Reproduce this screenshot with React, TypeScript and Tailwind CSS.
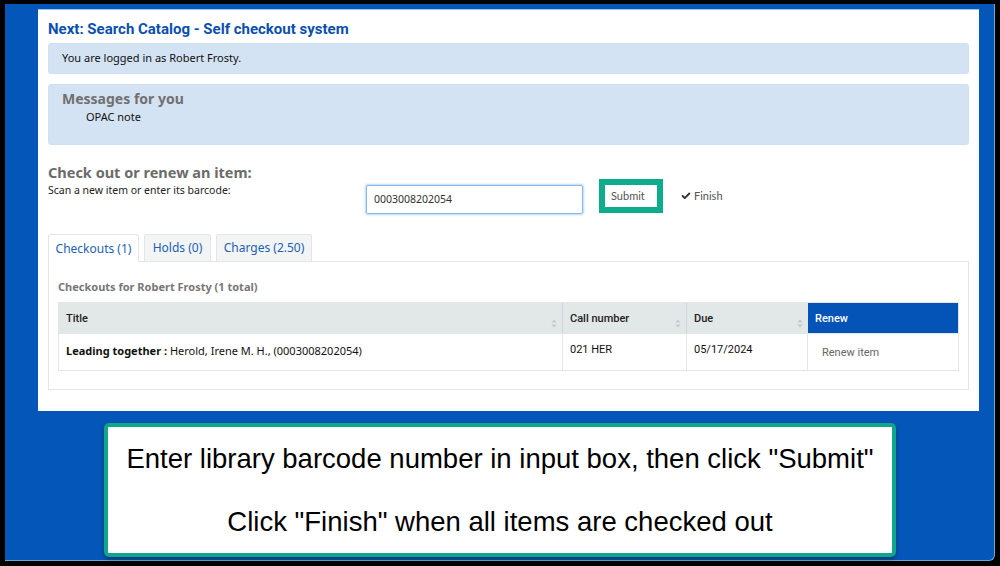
import { Check } from "lucide-react";

function SortIcon() {
  return (
    <svg width="6" height="9" viewBox="0 0 6 9" className="absolute right-[5px] bottom-[5px]">
      <path d="M3 0.5 L5.5 3.5 H0.5 Z" fill="#c3c8cc" />
      <path d="M3 8.5 L5.5 5.5 H0.5 Z" fill="#c3c8cc" />
    </svg>
  );
}

export default function App() {
  const noto = "font-['Noto_Sans','Open_Sans',sans-serif]";
  return (
    <div className="w-[1000px] h-[566px] bg-black pt-[4px] pl-[5px] pr-[5px] pb-[5px]">
      <div className="w-full h-full bg-[#0456b8] rounded-br-[6px] border-b border-r border-[#6fa7c7] flex flex-col items-start">
        {/* page panel */}
        <div className={`ml-[33px] mt-[5px] w-[941px] h-[402px] bg-white border-t border-[#9cc3ee] px-[10px] ${noto}`}>
          <h1 className="mt-[9px] text-[15px] leading-[20px] font-bold text-[#0a4fb0] font-['Roboto',sans-serif]">
            Next: Search Catalog - Self checkout system
          </h1>
          <div className="mt-[4px] h-[31px] rounded-[3px] bg-[#d4e3f3] border border-[#cfe0f1] pl-[13px] flex items-center text-[11px] text-[#111]">
            You are logged in as Robert Frosty.
          </div>
          <div className="mt-[10px] h-[61px] rounded-[3px] bg-[#d4e3f3] border border-[#cfe0f1] pl-[13px] pt-[4px]">
            <div className="text-[14px] leading-[20px] font-bold text-[#707070]">Messages for you</div>
            <div className="pl-[24px] text-[11px] leading-[16px] text-[#111]">OPAC note</div>
          </div>

          {/* checkout form */}
          <div className="mt-[18px] flex">
            <div className="w-[318px]">
              <div className="text-[14.5px] leading-[18px] font-bold text-[#6b6b6b]">Check out or renew an item:</div>
              <div className="mt-[2px] text-[10.5px] leading-[14px] text-[#222]">Scan a new item or enter its barcode:</div>
            </div>
            <div className="mt-[22px] w-[217px] h-[29px] border border-[#86b8ec] rounded-[2px] shadow-[0_0_2px_1px_rgba(120,175,235,0.5)] flex items-center pl-[7px] text-[10.5px] text-[#333]">
              0003008202054
            </div>
            <div className="ml-[16px] mt-[16px] w-[64px] h-[34px] border-[6px] border-[#0cac8c] flex items-center pl-[6px] text-[11px] text-[#555] font-['Lato',sans-serif]">
              Submit
            </div>
            <div className="ml-[18px] mt-[26px] flex items-center gap-[3px] text-[11px] text-[#555] h-[14px] font-['Lato',sans-serif]">
              <Check size={10} strokeWidth={4.5} className="text-[#333]" />
              Finish
            </div>
          </div>

          {/* tabs */}
          <div className="mt-[20px] flex items-end gap-[5px] text-[12px] text-[#1d5fb5]">
            <div className="w-[91px] h-[28px] bg-white border border-b-0 border-[#e3e5e6] rounded-t-[3px] flex items-center justify-center relative -mb-px z-10">
              Checkouts (1)
            </div>
            <div className="w-[67px] h-[27px] bg-[#f2f4f5] border border-b-0 border-[#e3e5e6] rounded-t-[3px] flex items-center justify-center">
              Holds (0)
            </div>
            <div className="w-[96px] h-[27px] bg-[#f2f4f5] border border-b-0 border-[#e3e5e6] rounded-t-[3px] flex items-center justify-center">
              Charges (2.50)
            </div>
          </div>
          <div className="h-[129px] border border-[#e3e5e6] px-[9px] pt-[18px]">
            <div className="text-[11px] leading-[14px] font-bold text-[#777]">Checkouts for Robert Frosty (1 total)</div>
            <div className="mt-[8px] border border-[#e3e5e6]">
              <div className="flex h-[30px] text-[11px] font-['Roboto',sans-serif] font-medium text-[#222]">
                <div className="w-[504px] bg-[#e2e7e8] pl-[7px] pt-[8px] relative border-r border-[#d0d6d8]">Title<SortIcon /></div>
                <div className="w-[124px] bg-[#e2e7e8] pl-[7px] pt-[8px] relative border-r border-[#d0d6d8]">Call number<SortIcon /></div>
                <div className="w-[121px] bg-[#e2e7e8] pl-[7px] pt-[8px] relative">Due<SortIcon /></div>
                <div className="flex-1 bg-[#0354b6] pl-[7px] pt-[8px] text-white">Renew</div>
              </div>
              <div className="flex h-[37px] text-[11px] text-[#111] border-t border-[#e3e5e6]">
                <div className="w-[504px] pl-[7px] pt-[9px] border-r border-[#e3e5e6]">
                  <span className="font-bold">Leading together :</span> Herold, Irene M. H., (0003008202054)
                </div>
                <div className="w-[124px] pl-[7px] pt-[8px] border-r border-[#e3e5e6] font-['Roboto',sans-serif]">021 HER</div>
                <div className="w-[121px] pl-[7px] pt-[8px] border-r border-[#e3e5e6] font-['Roboto',sans-serif]">05/17/2024</div>
                <div className="flex-1 pl-[14px] pt-[11px] text-[#666] font-['Roboto',sans-serif]">Renew item</div>
              </div>
            </div>
          </div>
        </div>

        {/* instructions callout */}
        <div className="ml-[99px] mt-[12px] w-[792px] h-[134px] bg-white border-[4px] border-[#0fa68b] rounded-[5px] shadow-[0_2px_4px_rgba(0,0,0,0.4)] flex flex-col items-center justify-center gap-[32px] font-['Liberation_Sans',Arial,sans-serif] text-[27.5px] leading-[31px] text-black">
          <div>Enter library barcode number in input box, then click "Submit"</div>
          <div>Click "Finish" when all items are checked out</div>
        </div>
      </div>
    </div>
  );
}
